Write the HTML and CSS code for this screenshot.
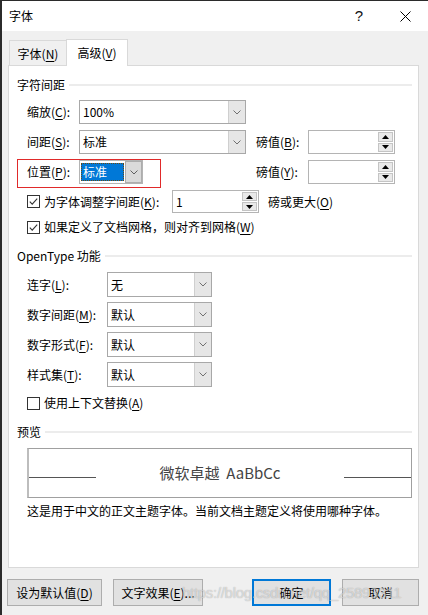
FILE: index.html
```html
<!DOCTYPE html>
<html lang="zh-CN">
<head>
<meta charset="utf-8">
<title>字体</title>
<link rel="stylesheet" href="styles.css">
</head>
<body>
<div class="window">
  <div class="titlebar">
    <span class="title">字体</span>
    <span class="help">?</span>
    <span class="close"><svg width="11" height="11" viewBox="0 0 11 11"><path d="M0.5 0.5L10.5 10.5M10.5 0.5L0.5 10.5" stroke="#000" stroke-width="1" fill="none"/></svg></span>
  </div>

  <div class="tabs">
    <div class="tab">字体(<u>N</u>)</div>
    <div class="tab active">高级(<u>V</u>)</div>
  </div>

  <div class="panel">
    <div class="sec-head"><span>字符间距</span></div>

    <div class="row r-first">
      <span class="lbl">缩放(<u>C</u>):</span>
      <div class="combo wide"><span class="val">100%</span><span class="dd"><svg width="8" height="5" viewBox="0 0 8 5"><path d="M0.5 0.5L4 4L7.5 0.5" stroke="#707070" fill="none"/></svg></span></div>
    </div>

    <div class="row">
      <span class="lbl">间距(<u>S</u>):</span>
      <div class="combo wide"><span class="val">标准</span><span class="dd"><svg width="8" height="5" viewBox="0 0 8 5"><path d="M0.5 0.5L4 4L7.5 0.5" stroke="#707070" fill="none"/></svg></span></div>
      <span class="gap"></span>
      <span class="lbl">磅值(<u>B</u>):</span>
      <div class="spin"><span class="sval"></span><span class="sbtns"><span class="sb"><svg width="7" height="4" viewBox="0 0 7 4"><path d="M0 4L3.5 0L7 4Z" fill="#000"/></svg></span><span class="sb"><svg width="7" height="4" viewBox="0 0 7 4"><path d="M0 0L3.5 4L7 0Z" fill="#000"/></svg></span></span></div>
    </div>

    <div class="row r-pos">
      <span class="lbl">位置(<u>P</u>):</span>
      <div class="combo small focus"><span class="val"><span class="sel">标准</span></span><span class="dd"><svg width="8" height="5" viewBox="0 0 8 5"><path d="M0.5 0.5L4 4L7.5 0.5" stroke="#606060" fill="none"/></svg></span></div>
      <span class="gap"></span>
      <span class="lbl">磅值(<u>Y</u>):</span>
      <div class="spin"><span class="sval"></span><span class="sbtns"><span class="sb"><svg width="7" height="4" viewBox="0 0 7 4"><path d="M0 4L3.5 0L7 4Z" fill="#000"/></svg></span><span class="sb"><svg width="7" height="4" viewBox="0 0 7 4"><path d="M0 0L3.5 4L7 0Z" fill="#000"/></svg></span></span></div>
      <span class="mark"></span>
    </div>

    <div class="chk-row kern">
      <svg class="cb" width="13" height="13" viewBox="0 0 13 13"><rect x="0.5" y="0.5" width="12" height="12" fill="#fff" stroke="#333"/><path d="M2.8 6.6L5.2 9.1L10.2 3.6" stroke="#333" stroke-width="1.1" fill="none"/></svg>
      <span class="kern-lbl">为字体调整字间距(<u>K</u>):</span>
      <div class="spin kspin"><span class="sval">1</span><span class="sbtns"><span class="sb"><svg width="7" height="4" viewBox="0 0 7 4"><path d="M0 4L3.5 0L7 4Z" fill="#000"/></svg></span><span class="sb"><svg width="7" height="4" viewBox="0 0 7 4"><path d="M0 0L3.5 4L7 0Z" fill="#000"/></svg></span></span></div>
      <span class="kern-after">磅或更大(<u>O</u>)</span>
    </div>

    <div class="chk-row grid-chk">
      <svg class="cb" width="13" height="13" viewBox="0 0 13 13"><rect x="0.5" y="0.5" width="12" height="12" fill="#fff" stroke="#333"/><path d="M2.8 6.6L5.2 9.1L10.2 3.6" stroke="#333" stroke-width="1.1" fill="none"/></svg>
      <span class="chk-lbl">如果定义了文档网格，则对齐到网格(<u>W</u>)</span>
    </div>

    <div class="sec-head h-ot"><span>OpenType 功能</span></div>

    <div class="ot-row ot-first">
      <span class="lbl">连字(<u>L</u>):</span>
      <div class="combo ot"><span class="val">无</span><span class="dd"><svg width="8" height="5" viewBox="0 0 8 5"><path d="M0.5 0.5L4 4L7.5 0.5" stroke="#707070" fill="none"/></svg></span></div>
    </div>
    <div class="ot-row">
      <span class="lbl">数字间距(<u>M</u>):</span>
      <div class="combo ot"><span class="val">默认</span><span class="dd"><svg width="8" height="5" viewBox="0 0 8 5"><path d="M0.5 0.5L4 4L7.5 0.5" stroke="#707070" fill="none"/></svg></span></div>
    </div>
    <div class="ot-row">
      <span class="lbl">数字形式(<u>F</u>):</span>
      <div class="combo ot"><span class="val">默认</span><span class="dd"><svg width="8" height="5" viewBox="0 0 8 5"><path d="M0.5 0.5L4 4L7.5 0.5" stroke="#707070" fill="none"/></svg></span></div>
    </div>
    <div class="ot-row">
      <span class="lbl">样式集(<u>T</u>):</span>
      <div class="combo ot"><span class="val">默认</span><span class="dd"><svg width="8" height="5" viewBox="0 0 8 5"><path d="M0.5 0.5L4 4L7.5 0.5" stroke="#707070" fill="none"/></svg></span></div>
    </div>

    <div class="chk-row ctx">
      <svg class="cb" width="13" height="13" viewBox="0 0 13 13"><rect x="0.5" y="0.5" width="12" height="12" fill="#fff" stroke="#333"/></svg>
      <span class="chk-lbl">使用上下文替换(<u>A</u>)</span>
    </div>

    <div class="sec-head h-pre"><span>预览</span></div>

    <div class="preview">
      <span class="pline"></span>
      <span class="ptext">微软卓越&nbsp;&nbsp;AaBbCc</span>
      <span class="pline"></span>
    </div>

    <p class="desc">这是用于中文的正文主题字体。当前文档主题定义将使用哪种字体。</p>
  </div>

  <div class="buttons">
    <button class="btn b-def">设为默认值(<u>D</u>)</button>
    <button class="btn b-fx">文字效果(<u>E</u>)...</button>
    <span class="spacer"></span>
    <button class="btn b-ok">确定</button>
    <button class="btn b-cancel">取消</button>
  </div>

  <div class="watermark">https://blog.csdn.net/qq_25893311</div>
</div>
</body>
</html>
```

FILE: styles.css
```css
html, body {
  margin: 0;
  padding: 0;
}

body {
  width: 428px;
  height: 615px;
  overflow: hidden;
  background: #f0f0f0;
  font-family: "Noto Sans CJK SC", "Noto Sans", sans-serif;
  font-size: 12px;
  line-height: 16px;
  color: #000;
}

u {
  text-decoration: underline;
  text-underline-offset: 2px;
}

.window {
  position: relative;
  height: 615px;
  box-sizing: border-box;
  border-top: 1px solid #2b2b2b;
  border-left: 2px solid #2b2b2b;
  background: #f0f0f0;
}

/* title bar */
.titlebar {
  display: flex;
  align-items: center;
  height: 30px;
  background: #fff;
}

.title {
  flex: 1;
  padding-left: 7px;
  font-size: 12px;
}

.help,
.close {
  width: 46px;
  height: 30px;
  display: flex;
  align-items: center;
  justify-content: center;
}

.help {
  font-family: "Liberation Sans", "DejaVu Sans", sans-serif;
  font-size: 15px;
  color: #111;
}

/* tabs */
.tabs {
  display: flex;
  align-items: flex-end;
  height: 26px;
  margin-top: 8px;
  padding-left: 7px;
}

.tab {
  box-sizing: border-box;
  height: 25px;
  width: 58px;
  padding-top: 5px;
  text-align: center;
  border: 1px solid #d9d9d9;
  border-bottom: none;
  background: #f0f0f0;
}

.tab.active {
  position: relative;
  z-index: 1;
  height: 27px;
  width: 62px;
  margin-left: -1px;
  margin-bottom: -1px;
  background: #fff;
}

/* panel */
.panel {
  box-sizing: border-box;
  width: 411px;
  height: 503px;
  margin-left: 6px;
  padding: 11px 6px 0 8px;
  background: #fff;
  border: 1px solid #d9d9d9;
}

.sec-head {
  display: flex;
  align-items: center;
  height: 16px;
}

.sec-head::after {
  content: "";
  flex: 1;
  height: 2px;
  margin-left: 4px;
  background: #ececec;
}

.h-ot {
  margin-top: 12px;
}

.h-pre {
  margin-top: 12px;
}

/* spacing rows */
.row {
  position: relative;
  display: grid;
  grid-template-columns: 52px 167px 10px 52px 87px;
  align-items: center;
  height: 24px;
  margin-top: 6px;
  padding-left: 10px;
}

.row.r-first {
  margin-top: 7px;
}

.lbl {
  white-space: nowrap;
}

.combo {
  box-sizing: border-box;
  display: flex;
  height: 24px;
  border: 1px solid #a8a8a8;
  background: #fff;
}

.combo .val {
  flex: 1;
  padding-left: 3px;
  line-height: 22px;
  white-space: nowrap;
  overflow: hidden;
}

.combo .dd {
  box-sizing: border-box;
  width: 17px;
  display: flex;
  align-items: center;
  justify-content: center;
  background: #e6e6e6;
  border-left: 1px solid #cfcfcf;
}

.combo.small {
  width: 64px;
}

.combo.focus {
  border-color: #b4b4b4;
}

.combo.focus .val {
  padding: 2px 1px 2px 1px;
  line-height: 18px;
}

.combo.focus .sel {
  display: block;
  height: 18px;
  padding-left: 2px;
  background: #0078d7;
  color: #fff;
  outline: 1px dotted #6a4a10;
  outline-offset: -1px;
}

.combo.focus .dd {
  background: #dadada;
  border: 1px solid #adadad;
}

.mark {
  position: absolute;
  left: 0;
  top: -1px;
  width: 144px;
  height: 29px;
  box-sizing: border-box;
  border: 1px solid #e02a2a;
}

/* spinner */
.spin {
  box-sizing: border-box;
  display: flex;
  height: 24px;
  border: 1px solid #b4b4b4;
  background: #fff;
}

.sval {
  flex: 1;
  padding-left: 3px;
  line-height: 21px;
}

.sbtns {
  display: flex;
  flex-direction: column;
  width: 15px;
  padding: 1px 1px 1px 0;
  gap: 1px;
}

.sb {
  flex: 1;
  display: flex;
  align-items: center;
  justify-content: center;
  background: #e9e9e9;
  border: 1px solid #c4c4c4;
}

/* checkbox rows */
.chk-row {
  display: flex;
  align-items: center;
  padding-left: 10px;
}

.cb {
  flex: none;
}

.chk-lbl {
  margin-left: 4px;
  white-space: nowrap;
}

.kern {
  height: 23px;
  margin-top: 6px;
}

.kern-lbl {
  width: 128px;
  margin-left: 4px;
  white-space: nowrap;
}

.kspin {
  width: 87px;
  height: 23px;
}

.kern-after {
  margin-left: 9px;
  white-space: nowrap;
}

.grid-chk {
  height: 18px;
  margin-top: 5px;
}

.ctx {
  height: 18px;
  margin-top: 7px;
}

/* opentype rows */
.ot-row {
  display: grid;
  grid-template-columns: 80px 105px;
  align-items: center;
  height: 25px;
  margin-top: 5px;
  padding-left: 10px;
}

.ot-row.ot-first {
  margin-top: 8px;
}

.combo.ot {
  height: 25px;
}

.combo.ot .val {
  line-height: 23px;
}

/* preview */
.preview {
  box-sizing: border-box;
  display: flex;
  align-items: center;
  justify-content: space-between;
  height: 50px;
  margin: 8px 0 0 10px;
  border: 1px solid #a0a0a0;
  border-left: 2px solid #bdbdbd;
}

.pline {
  align-self: flex-end;
  width: 67px;
  height: 1px;
  margin-bottom: 19px;
  background: #555;
}

.ptext {
  font-size: 15px;
  line-height: 20px;
  color: #444;
  white-space: nowrap;
}

.desc {
  margin: 5px 0 0;
  padding-left: 10px;
  white-space: nowrap;
}

/* buttons */
.buttons {
  display: flex;
  height: 27px;
  margin-top: 11px;
  padding: 0 9px 0 5px;
  gap: 11px;
}

.spacer {
  flex: 1;
}

.btn {
  box-sizing: border-box;
  height: 27px;
  padding: 0;
  font: inherit;
  color: #000;
  background: #e1e1e1;
  border: 1px solid #adadad;
}

.b-def {
  width: 95px;
}

.b-fx {
  width: 90px;
}

.b-ok {
  width: 79px;
  border: 2px solid #0078d7;
}

.b-cancel {
  width: 77px;
}

.watermark {
  position: absolute;
  left: 180px;
  top: 580px;
  font-family: "Liberation Sans", "DejaVu Sans", sans-serif;
  font-size: 15px;
  line-height: 24px;
  letter-spacing: -0.3px;
  color: rgba(255, 255, 255, 0.55);
  text-shadow: 0 0 1px rgba(0, 0, 0, 0.35);
  white-space: nowrap;
  pointer-events: none;
}
```
